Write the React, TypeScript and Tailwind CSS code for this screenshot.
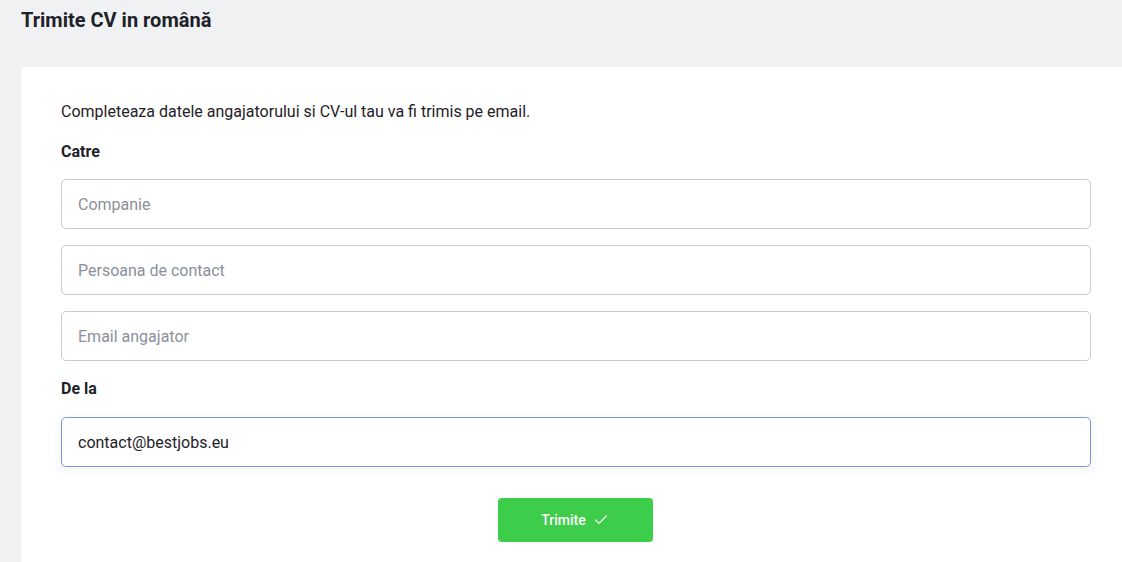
import { Check } from 'lucide-react';

const Field = ({ placeholder, value, focused }: { placeholder: string; value?: string; focused?: boolean }) => (
  <input
    type="text"
    placeholder={placeholder}
    defaultValue={value}
    className={
      'block w-full h-[50px] rounded-[5px] border bg-white px-4 text-[16px] text-[#1e2128] placeholder:text-[#8b909a] outline-none ' +
      (focused
        ? 'border-[#8a90cf] shadow-[0_2px_8px_rgba(120,130,200,0.12)]'
        : 'border-[#c7cad2]')
    }
  />
);

const App = () => {
  return (
    <div className="w-[1122px] h-[562px] overflow-hidden bg-[#f0f1f3] font-['Roboto',sans-serif] text-[#1e2128]">
      <h1 className="pl-[21px] pt-[7px] h-[67px] text-[20px] font-bold leading-[26px] text-[#1e2128]">
        Trimite CV in română
      </h1>
      <div className="ml-[21px] w-[1110px] rounded-tl-[5px] bg-white px-[40px] pt-[33px] pb-[40px]">
        <p className="text-[16px] leading-[24px]">
          Completeaza datele angajatorului si CV-ul tau va fi trimis pe email.
        </p>
        <div className="mt-[18px] text-[16px] font-bold leading-[20px]">Catre</div>
        <div className="mt-[17px] flex flex-col gap-[16px]">
          <Field placeholder="Companie" />
          <Field placeholder="Persoana de contact" />
          <Field placeholder="Email angajator" />
        </div>
        <div className="mt-[18px] text-[16px] font-bold leading-[20px]">De la</div>
        <div className="mt-[18px]">
          <Field placeholder="Email" value="contact@bestjobs.eu" focused />
        </div>
        <div className="mt-[31px] flex justify-center">
          <button className="flex h-[44px] w-[155px] -translate-x-px items-center justify-center gap-[7px] rounded-[4px] bg-[#3dcd4a] text-[14px] font-medium text-white">
            Trimite
            <Check size={16} strokeWidth={1.8} />
          </button>
        </div>
      </div>
    </div>
  );
};

export default App;
